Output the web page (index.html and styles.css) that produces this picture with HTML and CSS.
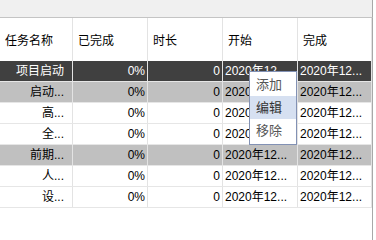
FILE: index.html
```html
<!DOCTYPE html>
<html lang="zh">
<head>
<meta charset="utf-8">
<link rel="stylesheet" href="styles.css">
</head>
<body>
<div class="page">
  <div class="topbar"></div>
  <div class="grid">
    <div class="row head">
      <div class="cell">任务名称</div>
      <div class="cell">已完成</div>
      <div class="cell">时长</div>
      <div class="cell">开始</div>
      <div class="cell">完成</div>
    </div>
    <div class="row dark">
      <div class="cell r name">项目启动</div>
      <div class="cell r">0%</div>
      <div class="cell r">0</div>
      <div class="cell">2020年12...</div>
      <div class="cell">2020年12...</div>
    </div>
    <div class="row gray">
      <div class="cell r name">启动...</div>
      <div class="cell r">0%</div>
      <div class="cell r">0</div>
      <div class="cell">2020年12...</div>
      <div class="cell">2020年12...</div>
    </div>
    <div class="row">
      <div class="cell r name">高...</div>
      <div class="cell r">0%</div>
      <div class="cell r">0</div>
      <div class="cell">2020年12...</div>
      <div class="cell">2020年12...</div>
    </div>
    <div class="row">
      <div class="cell r name">全...</div>
      <div class="cell r">0%</div>
      <div class="cell r">0</div>
      <div class="cell">2020年12...</div>
      <div class="cell">2020年12...</div>
    </div>
    <div class="row gray">
      <div class="cell r name">前期...</div>
      <div class="cell r">0%</div>
      <div class="cell r">0</div>
      <div class="cell">2020年12...</div>
      <div class="cell">2020年12...</div>
    </div>
    <div class="row">
      <div class="cell r name">人...</div>
      <div class="cell r">0%</div>
      <div class="cell r">0</div>
      <div class="cell">2020年12...</div>
      <div class="cell">2020年12...</div>
    </div>
    <div class="row">
      <div class="cell r name">设...</div>
      <div class="cell r">0%</div>
      <div class="cell r">0</div>
      <div class="cell">2020年12...</div>
      <div class="cell">2020年12...</div>
    </div>
    <div class="filler"></div>
  </div>
  <div class="menu">
    <div class="item">添加</div>
    <div class="item active">编辑</div>
    <div class="item">移除</div>
  </div>
</div>
</body>
</html>
```
FILE: styles.css
```css
html, body {
  margin: 0;
  padding: 0;
  background: #ffffff;
}
body {
  font-family: "Liberation Sans", "Noto Sans CJK SC", sans-serif;
  font-size: 12px;
  color: #000;
}
.page {
  position: relative;
  width: 376px;
  height: 240px;
  overflow: hidden;
  display: flex;
  flex-direction: column;
}
.topbar {
  height: 17px;
  width: 372px;
  background: #f0f0f0;
  border-bottom: 1px solid #c4c4c4;
  border-right: 1px solid #a8a8a8;
}
.grid {
  flex: 1;
  width: 372px;
  border-right: 1px solid #a8a8a8;
  display: flex;
  flex-direction: column;
}
.row {
  display: grid;
  grid-template-columns: 73px 75px 75px 75px 74px;
  height: 21px;
  box-sizing: border-box;
  border-bottom: 1px solid #e6e6e6;
}
.row.head {
  height: 43px;
  border-bottom: none;
}
.row.head .cell {
  padding-top: 3px;
  padding-left: 5px;
}
.cell {
  box-sizing: border-box;
  border-right: 1px solid #e3e3e3;
  padding: 0 2px;
  display: flex;
  align-items: center;
  white-space: nowrap;
  overflow: hidden;
  line-height: 14px;
}
.cell.r {
  justify-content: flex-end;
}
.cell.name {
  padding-right: 8px;
}
.row.dark {
  background: #404040;
  color: #ffffff;
}
.row.gray {
  background: #c0c0c0;
}
.filler {
  flex: 1;
}
.menu {
  position: absolute;
  left: 249px;
  top: 71px;
  width: 48px;
  box-sizing: border-box;
  background: #ffffff;
  border: 1px solid #8291b4;
  padding: 1px 0 2px;
  display: flex;
  flex-direction: column;
}
.item {
  height: 23px;
  display: flex;
  align-items: center;
  padding-left: 6px;
  font-size: 13px;
  line-height: 15px;
  color: #555555;
}
.item.active {
  background: #d6e0f1;
  color: #333333;
}
```
